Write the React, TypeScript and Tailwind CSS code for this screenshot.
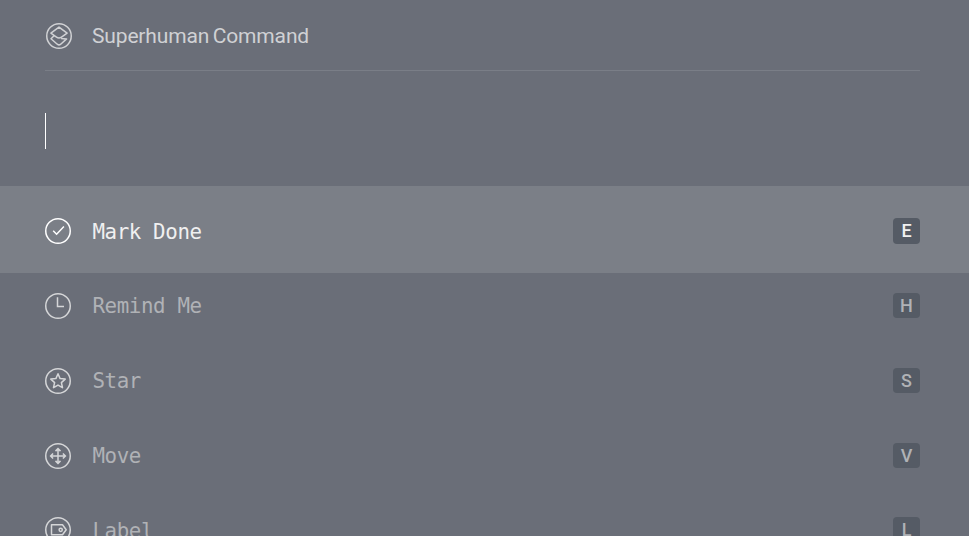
import type { ReactNode } from "react";

type Command = { label: string; shortcut: string; icon: ReactNode; row: string; text: string; active?: boolean };

function CircleIcon({ children, className = "" }: { children: ReactNode; className?: string }) {
  return (
    <svg
      viewBox="0 0 26 26"
      fill="none"
      stroke="currentColor"
      strokeWidth="1.5"
      className={`h-[26px] w-[26px] shrink-0 ${className}`}
    >
      <circle cx="13" cy="13" r="12.25" />
      {children}
    </svg>
  );
}

const commands: Command[] = [
  {
    label: "Mark Done",
    shortcut: "E",
    row: "h-[87px] pt-[3px]",
    text: "pt-[2px]",
    active: true,
    icon: <path d="m8.2 12.8 3.4 3.4 7.3-7.6" />,
  },
  {
    label: "Remind Me",
    shortcut: "H",
    row: "h-[66px]",
    text: "",
    icon: <path d="M12.5 4.2v9.4h6.5" />,
  },
  {
    label: "Star",
    shortcut: "S",
    row: "h-[84px]",
    text: "",
    icon: (
      <path
        strokeLinejoin="round"
        d="m13 5.8 2.1 4.8 5.1.5-3.8 3.5 1.1 5.1-4.5-2.6-4.5 2.6 1.1-5.1-3.8-3.5 5.1-.5z"
      />
    ),
  },
  {
    label: "Move",
    shortcut: "V",
    row: "h-[66px]",
    text: "",
    icon: (
      <path d="M13 5.7v14.6M5.7 13h14.6M10.5 8.1 13 5.6l2.5 2.5M10.5 17.9l2.5 2.5 2.5-2.5M8.1 10.5 5.6 13l2.5 2.5M17.9 10.5l2.5 2.5-2.5 2.5" />
    ),
  },
  {
    label: "Label",
    shortcut: "L",
    row: "h-[82px]",
    text: "pt-[2px]",
    icon: (
      <>
        <path strokeLinejoin="round" d="M6.5 7.8h11l3.7 5-3.7 5h-11z" />
        <circle cx="15.7" cy="12.8" r="1.6" />
      </>
    ),
  },
];

function CommandRow({ command }: { command: Command }) {
  const { active } = command;
  return (
    <li
      className={`flex shrink-0 items-center pr-[49px] pl-[45px] ${command.row} ${
        active ? "bg-[#7b7f87] text-[#f0f0f0]" : "text-[#b0b2b6]"
      }`}
    >
      <CircleIcon className={active ? "text-white" : "text-[#d5d6d8]"}>{command.icon}</CircleIcon>
      <span
        className={`ml-[21.4px] grow font-['DejaVu_Sans_Mono',monospace] text-[20.8px] leading-[26px] tracking-[-0.38px] whitespace-pre ${command.text}`}
      >
        {command.label}
      </span>
      <kbd
        className={`flex w-[27px] items-center justify-center rounded-[4px] bg-[#555b65] font-['Roboto',sans-serif] text-[18px] leading-none font-medium ${
          active ? "h-[26px]" : "mb-px h-[25px]"
        }`}
      >
        {command.shortcut}
      </kbd>
    </li>
  );
}

export default function App() {
  return (
    <main className="flex h-[536px] w-[969px] flex-col overflow-hidden bg-[#6a6e78]">
      <header className="mx-[45px] mr-[49px] flex h-[71px] shrink-0 items-center border-b border-[#7a7e87] pt-[2px] pl-px text-[#d0d1d4]">
        <CircleIcon>
          <path
            strokeLinejoin="round"
            d="m13 4.1 8.1 6-5.6 4.1q-2.5 1.8-5 0L4.9 10.1zM7.8 13 5 15.7l6.3 5.5q1.7 1.4 3.4 0l5.9-5.3-2.8-.2-2.7-.2"
          />
        </CircleIcon>
        <h1 className="ml-5 font-['Roboto',sans-serif] text-[21px] leading-[26px] tracking-[-0.15px] word-spacing-normal whitespace-nowrap [word-spacing:-1.5px]">
          Superhuman Command
        </h1>
      </header>
      <div className="flex h-[115px] shrink-0 items-start pt-[42px] pl-[45px]">
        <span className="h-9 w-px bg-white" />
      </div>
      <ul className="flex flex-col">
        {commands.map((command) => (
          <CommandRow key={command.label} command={command} />
        ))}
      </ul>
    </main>
  );
}
